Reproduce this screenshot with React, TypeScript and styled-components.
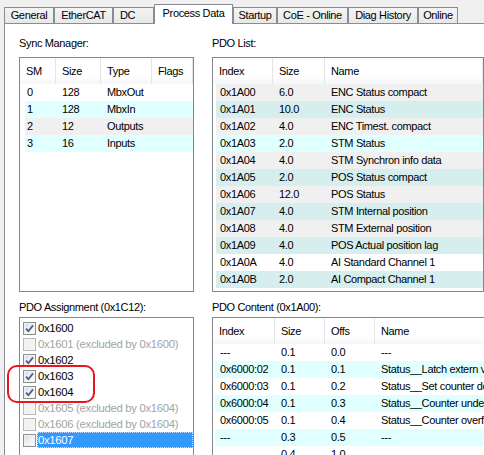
import React from 'react';
import styled, { createGlobalStyle } from 'styled-components';

const GlobalStyle = createGlobalStyle`
  html, body {
    margin: 0;
    padding: 0;
    background: #f0f0f0;
  }
  body {
    font-family: "Liberation Sans", Arial, sans-serif;
    font-size: 11px;
    letter-spacing: -0.35px;
    color: #000;
  }
`;

const Window = styled.div`
  width: 484px;
  height: 455px;
  overflow: hidden;
  background: #f0f0f0;
`;

const TabStrip = styled.div`
  display: flex;
  align-items: flex-end;
  height: 23px;
  padding-left: 4px;
  box-sizing: border-box;
`;

const Tab = styled.div<{ $w: number; $active?: boolean; $pad?: number }>`
  box-sizing: border-box;
  flex: none;
  width: ${p => p.$w}px;
  height: ${p => (p.$active ? 20 : 16)}px;
  margin-bottom: ${p => (p.$active ? -1 : 0)}px;
  position: relative;
  z-index: ${p => (p.$active ? 2 : 1)};
  border: 1px solid #898c95;
  border-bottom: none;
  background: ${p => (p.$active ? '#fff' : 'linear-gradient(#f4f4f4, #e8e8e8)')};
  line-height: ${p => (p.$active ? 16 : 15)}px;
  text-align: ${p => (p.$pad ? 'left' : 'center')};
  padding-left: ${p => p.$pad ?? 0}px;
  white-space: nowrap;
`;

const Body = styled.div`
  margin-left: 4px;
  border-top: 1px solid #898c95;
  border-left: 1px solid #898c95;
  background: #fff;
  height: 440px;
  box-sizing: border-box;
  padding: 13px 0 0 14px;
  display: grid;
  grid-template-columns: 175px 300px;
  grid-template-rows: 13px 251px 13px 1fr;
  column-gap: 18px;
  align-items: start;
`;

const Label = styled.div`
  line-height: 13px;
  white-space: nowrap;
`;

const ListBox = styled.div<{ $w?: number; $h: number; $mt: number }>`
  box-sizing: border-box;
  width: ${p => (p.$w ? `${p.$w}px` : '100%')};
  height: ${p => p.$h}px;
  margin-top: ${p => p.$mt}px;
  border: 1px solid #828790;
  background: #fff;
  overflow: hidden;
`;

const HeaderRow = styled.div<{ $cols: string }>`
  display: grid;
  grid-template-columns: ${p => p.$cols};
  height: 26px;
  background: linear-gradient(#ffffff, #ffffff 70%, #f5f6f8);
`;

const HeaderCell = styled.div`
  border-right: 1px solid #e3e5e8;
  padding-left: 6px;
  line-height: 26px;
  white-space: nowrap;
  overflow: hidden;
`;

const Row = styled.div<{ $cols: string; $bg: string; $inset: number }>`
  display: grid;
  grid-template-columns: ${p => p.$cols};
  height: 17px;
  line-height: 17px;
  margin-left: ${p => p.$inset}px;
  background: ${p => p.$bg};
`;

const Cell = styled.div<{ $pad?: number }>`
  padding-left: ${p => p.$pad ?? 6}px;
  white-space: nowrap;
  overflow: hidden;
`;

const AssignWrap = styled.div`
  position: relative;
  margin-top: 3px;
`;

const AssignList = styled.div`
  box-sizing: border-box;
  height: 160px;
  border: 1px solid #828790;
  background: #fff;
  padding: 2px 0 0 3px;
`;

const AssignItem = styled.div<{ $disabled?: boolean }>`
  display: flex;
  align-items: center;
  height: 16px;
  color: ${p => (p.$disabled ? '#a3a3a3' : '#000')};
  font-size: 11.3px;
  letter-spacing: -0.3px;
`;

const Box = styled.span<{ $disabled?: boolean }>`
  box-sizing: border-box;
  flex: none;
  width: 13px;
  height: 13px;
  margin-right: 1px;
  border: 1px solid ${p => (p.$disabled ? '#b8b8b8' : '#8e8f8f')};
  background: ${p =>
    p.$disabled ? '#f2f2f2' : 'linear-gradient(135deg, #dcdcdc, #f4f4f4 60%, #ffffff)'};
  box-shadow: inset 0 0 0 1px ${p => (p.$disabled ? '#f7f7f7' : '#f2f2f2')};
  display: flex;
  align-items: center;
  justify-content: center;
`;

const ItemText = styled.span<{ $selected?: boolean }>`
  flex: 1;
  height: 16px;
  line-height: 16px;
  padding-left: 1px;
  box-sizing: border-box;
  white-space: nowrap;
  background: ${p => (p.$selected ? '#3399ff' : 'transparent')};
  color: ${p => (p.$selected ? '#fff' : 'inherit')};
  outline: ${p => (p.$selected ? '1px dotted #c8e0ff' : 'none')};
  outline-offset: -1px;
`;

const Annotation = styled.div`
  position: absolute;
  left: -12px;
  top: 48px;
  width: 88px;
  height: 38px;
  box-sizing: border-box;
  border: 2px solid #e8161c;
  border-radius: 10px;
  pointer-events: none;
`;

const CYAN = '#e0ffff';
const TEAL = '#d6eeee';
const GRAY = '#f0f0f0';
const WHITE = '#ffffff';

const tabs = [
  { label: 'General', w: 50 },
  { label: 'EtherCAT', w: 59 },
  { label: 'DC', w: 41, pad: 6 },
  { label: 'Process Data', w: 79, active: true },
  { label: 'Startup', w: 44 },
  { label: 'CoE - Online', w: 71 },
  { label: 'Diag History', w: 70 },
  { label: 'Online', w: 40 },
];

const syncRows = [
  { c: ['0', '128', 'MbxOut', ''], bg: WHITE },
  { c: ['1', '128', 'MbxIn', ''], bg: CYAN },
  { c: ['2', '12', 'Outputs', ''], bg: GRAY },
  { c: ['3', '16', 'Inputs', ''], bg: CYAN },
];

const pdoRows = [
  { c: ['0x1A00', '6.0', 'ENC Status compact'], bg: GRAY },
  { c: ['0x1A01', '10.0', 'ENC Status'], bg: TEAL },
  { c: ['0x1A02', '4.0', 'ENC Timest. compact'], bg: GRAY },
  { c: ['0x1A03', '2.0', 'STM Status'], bg: CYAN },
  { c: ['0x1A04', '4.0', 'STM Synchron info data'], bg: GRAY },
  { c: ['0x1A05', '2.0', 'POS Status compact'], bg: TEAL },
  { c: ['0x1A06', '12.0', 'POS Status'], bg: GRAY },
  { c: ['0x1A07', '4.0', 'STM Internal position'], bg: TEAL },
  { c: ['0x1A08', '4.0', 'STM External position'], bg: GRAY },
  { c: ['0x1A09', '4.0', 'POS Actual position lag'], bg: TEAL },
  { c: ['0x1A0A', '4.0', 'AI Standard Channel 1'], bg: WHITE },
  { c: ['0x1A0B', '2.0', 'AI Compact Channel 1'], bg: TEAL },
];

const contentRows = [
  { c: ['---', '0.1', '0.0', '---'], bg: WHITE },
  { c: ['0x6000:02', '0.1', '0.1', 'Status__Latch extern valid'], bg: CYAN },
  { c: ['0x6000:03', '0.1', '0.2', 'Status__Set counter done'], bg: WHITE },
  { c: ['0x6000:04', '0.1', '0.3', 'Status__Counter underflow'], bg: CYAN },
  { c: ['0x6000:05', '0.1', '0.4', 'Status__Counter overflow'], bg: WHITE },
  { c: ['---', '0.3', '0.5', '---'], bg: CYAN },
  { c: ['---', '0.4', '1.0', '---'], bg: WHITE },
];

const assignments = [
  { t: '0x1600', checked: true },
  { t: '0x1601 (excluded by 0x1600)', disabled: true },
  { t: '0x1602', checked: true },
  { t: '0x1603', checked: true },
  { t: '0x1604', checked: true },
  { t: '0x1605 (excluded by 0x1604)', disabled: true },
  { t: '0x1606 (excluded by 0x1604)', disabled: true },
  { t: '0x1607', selected: true },
];

type GridRow = { c: string[]; bg: string };

function Grid({ headers, widths, rows, inset }: { headers: string[]; widths: number[]; rows: GridRow[]; inset: number }) {
  const headCols = widths.map(w => `${w}px`).join(' ') + ' 1fr';
  const bodyCols = widths.map((w, i) => `${i === 0 ? w - inset : w}px`).join(' ') + ' 1fr';
  return (
    <>
      <HeaderRow $cols={headCols}>
        {headers.map(h => (
          <HeaderCell key={h}>{h}</HeaderCell>
        ))}
      </HeaderRow>
      {rows.map((r, i) => (
        <Row key={i} $cols={bodyCols} $bg={r.bg} $inset={inset}>
          {r.c.map((v, j) => (
            <Cell key={j} $pad={j === 0 ? Math.max(1, 7 - inset) : 6}>
              {v}
            </Cell>
          ))}
        </Row>
      ))}
    </>
  );
}

const Check = () => (
  <svg width="9" height="9" viewBox="0 0 9 9">
    <path d="M1 4.6 L3.4 7.2 L8 1.4" fill="none" stroke="#4a5c8e" strokeWidth="1.7" />
  </svg>
);

export default function App() {
  return (
    <Window>
      <GlobalStyle />
      <TabStrip>
        {tabs.map(t => (
          <Tab key={t.label} $w={t.w} $active={t.active} $pad={t.pad}>
            {t.label}
          </Tab>
        ))}
      </TabStrip>
      <Body>
        <Label>Sync Manager:</Label>
        <Label>PDO List:</Label>

        <ListBox $h={235} $mt={7}>
          <Grid headers={['SM', 'Size', 'Type', 'Flags']} widths={[36, 45, 51]} rows={syncRows} inset={5} />
        </ListBox>
        <ListBox $w={272} $h={235} $mt={7}>
          <Grid headers={['Index', 'Size', 'Name']} widths={[60, 52]} rows={pdoRows} inset={3} />
        </ListBox>

        <Label>PDO Assignment (0x1C12):</Label>
        <Label>PDO Content (0x1A00):</Label>

        <AssignWrap>
          <AssignList>
            {assignments.map(a => (
              <AssignItem key={a.t} $disabled={a.disabled}>
                <Box $disabled={a.disabled}>{a.checked && <Check />}</Box>
                <ItemText $selected={a.selected}>{a.t}</ItemText>
              </AssignItem>
            ))}
          </AssignList>
          <Annotation />
        </AssignWrap>
        <ListBox $h={160} $mt={3}>
          <Grid headers={['Index', 'Size', 'Offs', 'Name']} widths={[62, 50, 50]} rows={contentRows} inset={2} />
        </ListBox>
      </Body>
    </Window>
  );
}
